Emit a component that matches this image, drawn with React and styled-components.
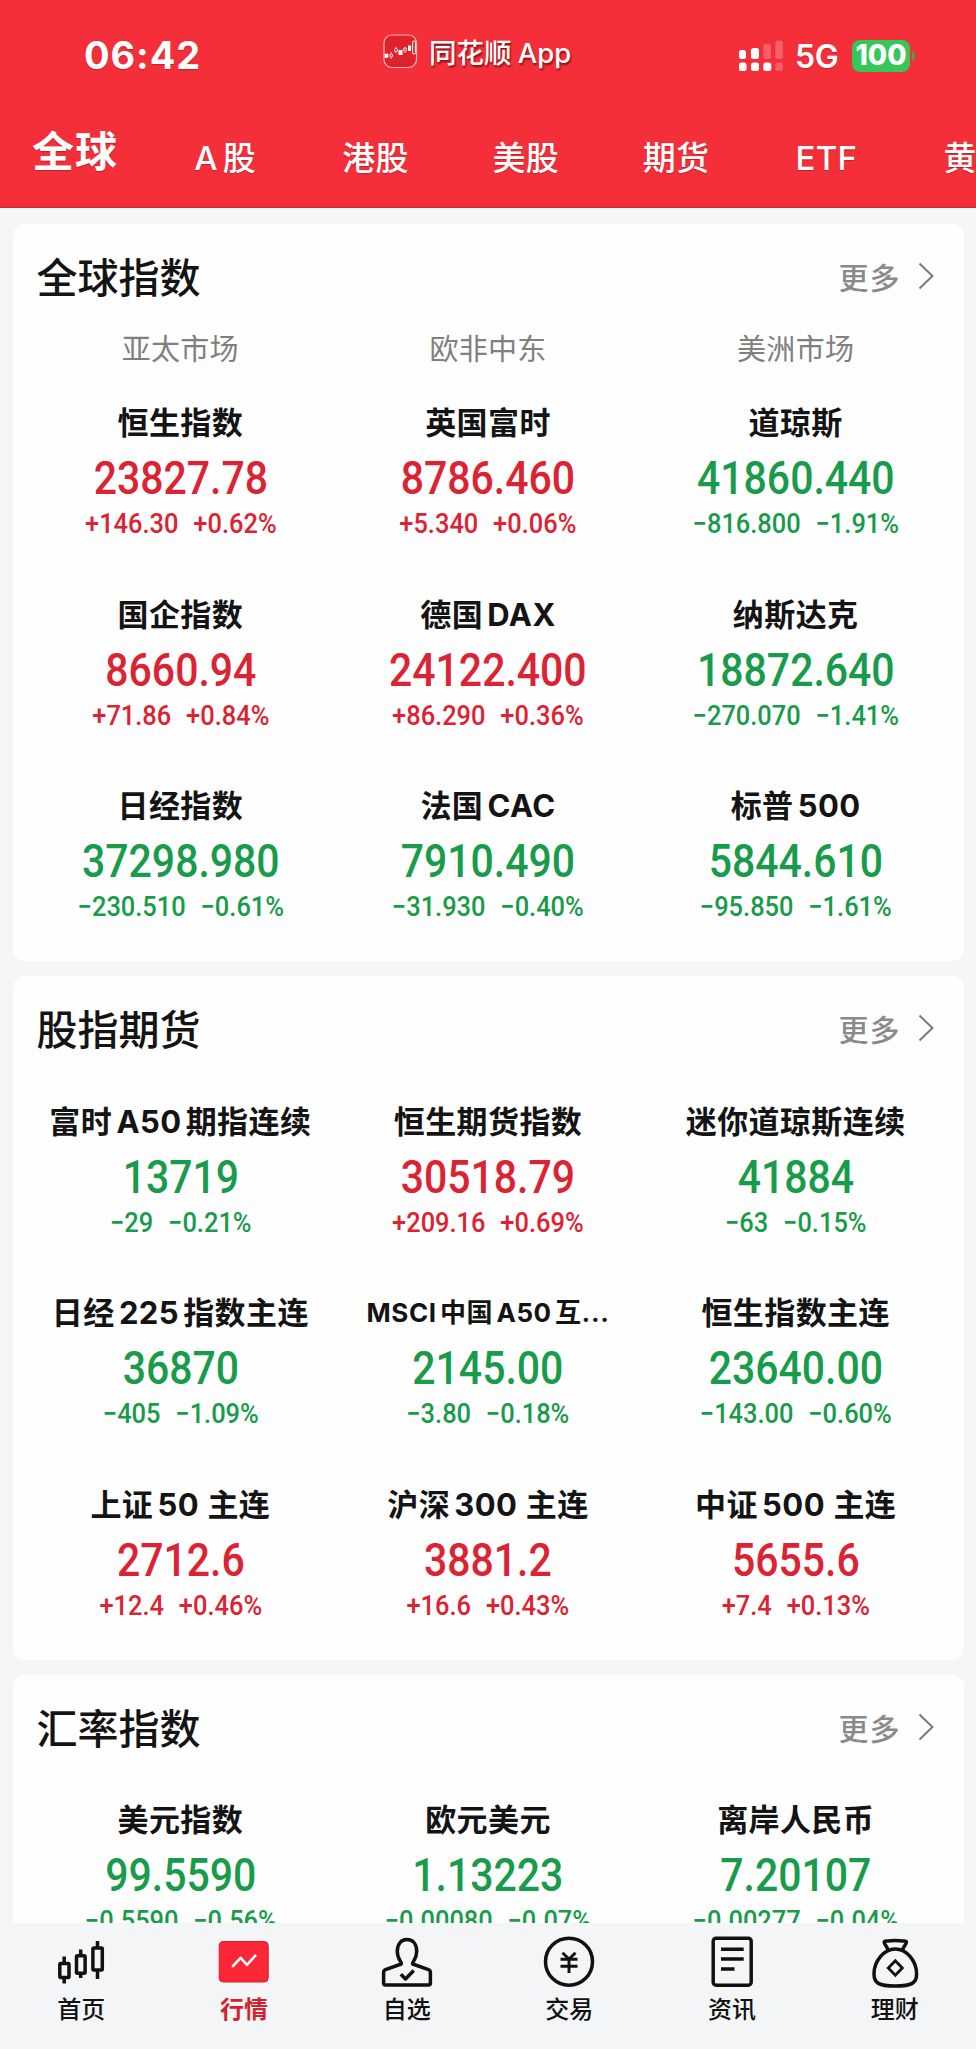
import React from 'react';
import styled, { createGlobalStyle } from 'styled-components';

const RED = '#dc2333';
const GREEN = '#189b4a';

const GlobalStyle = createGlobalStyle`
    * {
        box-sizing: border-box;
    }
    body {
        margin: 0;
        font-family: Inter, "Noto Sans CJK SC", sans-serif;
        color: #141414;
        -webkit-font-smoothing: antialiased;
    }
`;

const Page = styled.div`
    display: flex;
    flex-direction: column;
    width: 976px;
    height: 2049px;
    overflow: hidden;
    background: #f5f6f8;
`;

const Header = styled.header`
    flex: none;
    height: 208px;
    background: #f42f3a;
    border-bottom: 1px solid #c92b34;
    color: #fff;
    overflow: hidden;
`;

const StatusBar = styled.div`
    display: grid;
    grid-template-columns: 383px 1fr 238px;
    height: 111px;
    text-shadow: 0 1px 1px rgba(110, 0, 0, 0.35);
`;

const Clock = styled.div`
    padding-left: 84px;
    font-size: 38px;
    line-height: 111px;
    font-weight: 750;
    letter-spacing: 0.9px;
`;

const AppBadge = styled.div`
    display: flex;
    align-items: center;
    gap: 11px;
    height: 103px;
    font-size: 27.5px;
    font-weight: 550;
    white-space: pre;
    word-spacing: -1px;
    text-shadow: 1px 2px 2px rgba(90, 0, 0, 0.7);
`;

const AppName = styled.span`
    margin-top: -2px;
`;

const Signals = styled.div`
    display: flex;
    align-items: center;
    height: 111px;
`;

const Network = styled.span`
    width: 45px;
    margin: 2px 12px 0 12px;
    font-size: 32px;
    font-weight: 600;
    letter-spacing: -0.5px;
`;

const Battery = styled.div`
    width: 58px;
    height: 32px;
    border-radius: 8px;
    background: #35c759;
    font-size: 28px;
    font-weight: 800;
    line-height: 31px;
    text-align: center;
    text-shadow: none;
`;

const BatteryTip = styled.div`
    width: 3px;
    height: 10px;
    margin-left: 2px;
    border-radius: 0 4px 4px 0;
    background: #5f9a4c;
`;

const Tabs = styled.nav`
    display: flex;
    height: 95px;
`;

const Tab = styled.div`
    flex: none;
    width: ${p => (p.$active ? '150px' : '150.3px')};
    padding-left: ${p => (p.$active ? '32px' : '0')};
    text-align: ${p => (p.$active ? 'left' : 'center')};
    font-size: ${p => (p.$active ? '42px' : '33px')};
    font-weight: ${p => (p.$active ? 700 : 500)};
    line-height: ${p => (p.$active ? '82px' : '94px')};
    letter-spacing: ${p => (p.$active ? '1px' : '0.2px')};
    white-space: nowrap;
    word-spacing: -4px;
    text-shadow: 0 1px 1px rgba(110, 0, 0, 0.35);
`;

const Main = styled.main`
    flex: 1;
    min-height: 0;
    overflow: hidden;
    display: flex;
    flex-direction: column;
    gap: 15px;
    padding: 16px 12.5px 0;
`;

const Card = styled.section`
    flex: none;
    padding: 0 14px 40px;
    border-radius: 12px;
    background: #fefefe;
`;

const CardHead = styled.div`
    display: flex;
    justify-content: space-between;
    align-items: center;
    height: 106px;
    padding: 0 16px 3px 10px;
`;

const CardTitle = styled.h2`
    margin: 0 0 1px;
    font-size: 41px;
    font-weight: 500;
`;

const More = styled.div`
    display: flex;
    align-items: center;
    gap: 17px;
    margin-top: 1px;
    font-size: 30px;
    font-weight: 500;
    letter-spacing: 1px;
    color: #8a8a8a;
`;

const Grid = styled.div`
    display: grid;
    grid-template-columns: repeat(3, 1fr);
    row-gap: 54.5px;
    padding-top: ${p => (p.$labelled ? '33px' : '17.5px')};
    text-align: center;
`;

const Markets = styled.div`
    display: grid;
    grid-template-columns: repeat(3, 1fr);
    height: 38px;
    line-height: 39px;
    font-size: 29px;
    letter-spacing: 0.3px;
    text-align: center;
    color: #808080;
`;

const Quote = styled.div`
    height: 137px;
    white-space: pre;
    color: ${p => (p.$up ? RED : GREEN)};
`;

const Name = styled.div`
    height: 44px;
    line-height: 44px;
    font-size: ${p => (p.$small ? '26px' : '31px')};
    font-weight: 650;
    letter-spacing: ${p => (p.$small ? '0.6px' : '0.4px')};
    word-spacing: -3.5px;
    color: #141414;
`;

const Value = styled.div`
    height: 64px;
    line-height: 67px;
    font-family: Roboto, sans-serif;
    font-size: 45.5px;
    font-weight: 500;
    transform: scaleX(0.9);
`;

const Change = styled.div`
    display: flex;
    justify-content: center;
    gap: 16px;
    height: 29px;
    line-height: 29px;
    font-family: Roboto, sans-serif;
    font-size: 27.5px;
    font-weight: 500;
    transform: scaleX(0.925);
`;

const TabBar = styled.footer`
    flex: none;
    display: grid;
    grid-template-columns: repeat(6, 1fr);
    height: 126px;
    padding-top: 10px;
    background: #f3f5f7;
`;

const TabItem = styled.div`
    display: flex;
    flex-direction: column;
    align-items: center;
    font-size: 24px;
    line-height: 44px;
    font-weight: ${p => (p.$active ? 700 : 500)};
    color: ${p => (p.$active ? '#d3222f' : '#111')};
`;

const Glyph = styled.svg`
    display: block;
    width: 54px;
    height: 55px;
    fill: none;
    stroke: #111;
    stroke-width: 3.5;
    stroke-linecap: round;
    stroke-linejoin: round;
`;

const AppIcon = () => (
    <svg width="35" height="35" viewBox="0 0 35 35" fill="none" stroke="#fff">
        <rect x="1" y="1" width="32.5" height="32.5" rx="8" fill="#e0222d" stroke="#ffb3b3" strokeWidth="1.2" />
        <rect x="2" y="20" width="3" height="3.5" fill="#fff" strokeWidth="0.6" />
        <rect x="7" y="20" width="2.4" height="3" rx="0.6" />
        <path d="M8.2 19v-1M8.2 24v1M13 14v-1M13 18v1M22 14v-1M22 18v1" strokeWidth="0.8" />
        <rect x="11.7" y="14.5" width="2.6" height="3.2" rx="0.8" />
        <rect x="16" y="16.5" width="3" height="4" fill="#fff" />
        <rect x="20.7" y="14" width="2.6" height="3.2" rx="0.8" />
        <rect x="25.5" y="12" width="2" height="4.5" fill="#fff" />
        <rect x="29.6" y="7" width="2.8" height="13" rx="1.2" />
    </svg>
);

const SignalIcon = () => (
    <svg width="45" height="31" viewBox="0 0 45 31" fill="#fff">
        <rect x="1" y="10" width="7" height="9" rx="2.5" />
        <rect x="13" y="8" width="8" height="11" rx="2.5" />
        <rect x="25.3" y="4" width="7.7" height="15" rx="2.5" opacity="0.23" />
        <rect x="37.3" y="0.5" width="7.5" height="18.5" rx="2.5" opacity="0.23" />
        <rect x="1" y="22.5" width="7.5" height="8.5" rx="2.5" />
        <rect x="13" y="22.5" width="8" height="8.5" rx="2.5" />
        <rect x="25.3" y="22.5" width="8" height="8.5" rx="2.5" />
        <rect x="37.3" y="22.5" width="7.5" height="8.5" rx="2.5" opacity="0.23" />
    </svg>
);

const Chevron = () => (
    <svg width="16" height="28" viewBox="0 0 16 28" fill="none" stroke="#777" strokeWidth="1.9">
        <path d="M1.5 1.5L14.5 14L1.5 26.5" />
    </svg>
);

const icons = {
    home: (
        <>
            <path d="M10.2 23.5V30M10.2 45V50.5M26.7 16.5V22M26.7 41V45M43.5 8V15M43.5 37.5V46" strokeLinecap="butt" />
            <rect x="5.8" y="30.5" width="9.2" height="14" rx="1" />
            <rect x="22.5" y="22.7" width="8.6" height="17.6" rx="1" />
            <rect x="38.9" y="15" width="9.4" height="22" rx="1" />
        </>
    ),
    quotes: (
        <>
            <rect x="2.2" y="8.5" width="49" height="40.5" rx="4" fill="#fb2636" stroke="#d6202d" strokeWidth="1" />
            <path d="M16 33L23.7 24.9L30 32L38.3 22.7" stroke="#fff" strokeWidth="2.6" />
        </>
    ),
    picks: (
        <>
            <path d="M21.3 31C22.6 29.4 17.3 27 17.3 18.5C17.3 11 21 6.6 27 6.6S36.7 11 36.7 18.5C36.7 27 31.4 29.4 32.7 31L48.5 36.6Q50.4 37.3 50.4 39.5V50Q50.4 52 48.4 52H5.6Q3.6 52 3.6 50V39.5Q3.6 37.3 5.5 36.6Z" />
            <path d="M20.8 41.3L25.5 46L33.7 37.5" strokeLinecap="butt" />
        </>
    ),
    trade: (
        <>
            <circle cx="27" cy="28.7" r="23.5" />
            <path d="M20.5 19.8L27 26L33.5 19.8M18.5 26.3H35.5M18.5 33.2H35.5M27 26V40" strokeLinecap="butt" strokeWidth="2.9" />
        </>
    ),
    news: (
        <>
            <rect x="8.2" y="5.2" width="38" height="47" rx="3" />
            <path d="M16 16.3H38.7M16 26H38.7M16 36H29.5" strokeLinecap="butt" />
        </>
    ),
    wealth: (
        <>
            <path d="M19.5 15.6C18.5 12.8 16.2 11 16.2 9.3C16.2 7.6 18.4 8.3 20 8C23 7.2 31.5 7.2 34.5 8C36.2 8.3 38.4 7.6 38.4 9.3C38.4 11 36 12.8 35 15.6" />
            <path d="M27.3 16C16 16 6 28 6 41C6 50 10.5 53 27.3 53S48.6 50 48.6 41C48.6 28 38.6 16 27.3 16Z" />
            <path d="M27.3 27.8L34.3 35L27.3 42.2L20.3 35Z" strokeLinejoin="miter" strokeWidth="2.8" />
        </>
    ),
};

const tabs = ['全球', 'A 股', '港股', '美股', '期货', 'ETF', '黄金'];

const menu = [
    ['home', '首页'],
    ['quotes', '行情'],
    ['picks', '自选'],
    ['trade', '交易'],
    ['news', '资讯'],
    ['wealth', '理财'],
];

const sections = [
    {
        title: '全球指数',
        markets: ['亚太市场', '欧非中东', '美洲市场'],
        quotes: [
            ['恒生指数', '23827.78', '+146.30', '+0.62%'],
            ['英国富时', '8786.460', '+5.340', '+0.06%'],
            ['道琼斯', '41860.440', '−816.800', '−1.91%'],
            ['国企指数', '8660.94', '+71.86', '+0.84%'],
            ['德国 DAX', '24122.400', '+86.290', '+0.36%'],
            ['纳斯达克', '18872.640', '−270.070', '−1.41%'],
            ['日经指数', '37298.980', '−230.510', '−0.61%'],
            ['法国 CAC', '7910.490', '−31.930', '−0.40%'],
            ['标普 500', '5844.610', '−95.850', '−1.61%'],
        ],
    },
    {
        title: '股指期货',
        quotes: [
            ['富时 A50 期指连续', '13719', '−29', '−0.21%'],
            ['恒生期货指数', '30518.79', '+209.16', '+0.69%'],
            ['迷你道琼斯连续', '41884', '−63', '−0.15%'],
            ['日经 225 指数主连', '36870', '−405', '−1.09%'],
            ['MSCI 中国 A50 互...', '2145.00', '−3.80', '−0.18%'],
            ['恒生指数主连', '23640.00', '−143.00', '−0.60%'],
            ['上证 50  主连', '2712.6', '+12.4', '+0.46%'],
            ['沪深 300  主连', '3881.2', '+16.6', '+0.43%'],
            ['中证 500  主连', '5655.6', '+7.4', '+0.13%'],
        ],
    },
    {
        title: '汇率指数',
        quotes: [
            ['美元指数', '99.5590', '−0.5590', '−0.56%'],
            ['欧元美元', '1.13223', '−0.00080', '−0.07%'],
            ['离岸人民币', '7.20107', '−0.00277', '−0.04%'],
        ],
    },
];

const Section = ({ title, markets, quotes }) => (
    <Card>
        <CardHead>
            <CardTitle>{title}</CardTitle>
            <More>更多<Chevron /></More>
        </CardHead>
        {markets && (
            <Markets>
                {markets.map(m => <span key={m}>{m}</span>)}
            </Markets>
        )}
        <Grid $labelled={!!markets}>
            {quotes.map(([name, value, diff, percent]) => (
                <Quote key={name} $up={diff[0] === '+'}>
                    <Name $small={name.endsWith('...')}>{name}</Name>
                    <Value>{value}</Value>
                    <Change>
                        <span>{diff}</span>
                        <span>{percent}</span>
                    </Change>
                </Quote>
            ))}
        </Grid>
    </Card>
);

export default () => {
    return (
        <Page>
            <GlobalStyle />
            <Header>
                <StatusBar>
                    <Clock>06:42</Clock>
                    <AppBadge>
                        <AppIcon />
                        <AppName>同花顺 App</AppName>
                    </AppBadge>
                    <Signals>
                        <SignalIcon />
                        <Network>5G</Network>
                        <Battery>100</Battery>
                        <BatteryTip />
                    </Signals>
                </StatusBar>
                <Tabs>
                    {tabs.map((t, i) => <Tab key={t} $active={i === 0}>{t}</Tab>)}
                </Tabs>
            </Header>
            <Main>
                {sections.map(s => <Section key={s.title} {...s} />)}
            </Main>
            <TabBar>
                {menu.map(([icon, label]) => (
                    <TabItem key={icon} $active={icon === 'quotes'}>
                        <Glyph viewBox="0 0 54 55">{icons[icon]}</Glyph>
                        {label}
                    </TabItem>
                ))}
            </TabBar>
        </Page>
    );
}
